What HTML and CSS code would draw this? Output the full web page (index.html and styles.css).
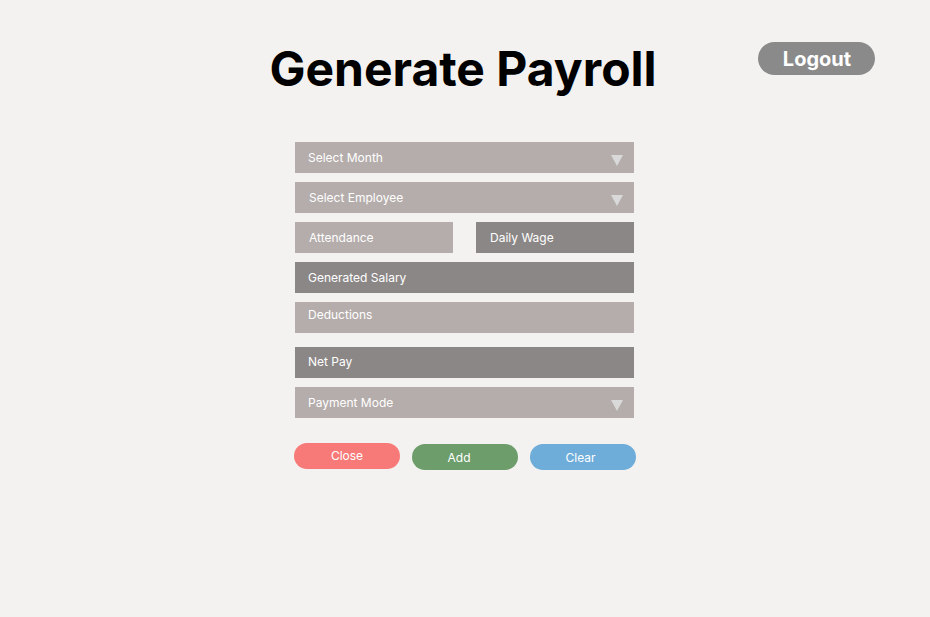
FILE: index.html
```html
<!DOCTYPE html>
<html lang="en">
<head>
<meta charset="utf-8">
<title>Generate Payroll</title>
<link rel="stylesheet" href="styles.css">
</head>
<body>
<div class="page">
  <header class="header">
    <div class="spacer"></div>
    <h1 class="title">Generate Payroll</h1>
    <div class="actions"><button class="logout">Logout</button></div>
  </header>
  <main class="form">
    <div class="field light select"><span>Select Month</span><span class="caret"></span></div>
    <div class="field light select shifted"><span>Select Employee</span><span class="caret"></span></div>
    <div class="pair">
      <div class="field light"><span>Attendance</span></div>
      <div class="field dark"><span>Daily Wage</span></div>
    </div>
    <div class="field dark"><span>Generated Salary</span></div>
    <div class="field light raised"><span>Deductions</span></div>
    <div class="field dark netpay"><span>Net Pay</span></div>
    <div class="field light select"><span>Payment Mode</span><span class="caret"></span></div>
    <div class="buttons">
      <button class="btn close">Close</button>
      <button class="btn add">Add</button>
      <button class="btn clear">Clear</button>
    </div>
  </main>
</div>
</body>
</html>
```
FILE: styles.css
```css
* { box-sizing: border-box; }
html, body { margin: 0; padding: 0; }
body {
  background: #f3f2f0;
  font-family: Inter, "Noto Sans", sans-serif;
  width: 930px;
  height: 617px;
  overflow: hidden;
}
.header {
  display: grid;
  grid-template-columns: 1fr auto 1fr;
  align-items: start;
  padding-top: 40px;
}
.title {
  margin: 0 4px 0 0;
  font-size: 48px;
  line-height: 58px;
  font-weight: 700;
  color: #000;
}
.actions {
  display: flex;
  justify-content: flex-end;
  padding-right: 55px;
  padding-top: 2px;
}
.logout {
  width: 117px;
  height: 33px;
  border: none;
  border-radius: 17px;
  background: #8a8a8a;
  color: #fff;
  font-family: Inter, "Noto Sans", sans-serif;
  font-weight: 700;
  font-size: 20px;
  padding: 0 0 0 1px;
}
.form {
  width: 339px;
  margin: 44px 0 0 calc(50% - 170px);
  display: flex;
  flex-direction: column;
  gap: 9px;
}
.field {
  height: 31px;
  display: flex;
  align-items: center;
  justify-content: space-between;
  padding: 0 11px 0 13px;
  color: #fff;
  font-size: 12px;
}
.field span:first-child { padding-bottom: 1px; }
.light { background: #b5adab; }
.dark { background: #8b8786; }
.shifted { padding-left: 14px; }
.raised { align-items: flex-start; padding-top: 5px; }
.netpay { margin-top: 5px; }
.netpay span:first-child { padding-bottom: 2px; }
.caret {
  width: 0;
  height: 0;
  border-left: 6.5px solid transparent;
  border-right: 6.5px solid transparent;
  border-top: 11px solid #d9d9d9;
  margin-top: 5px;
}
.pair {
  display: grid;
  grid-template-columns: 158px 158px;
  justify-content: space-between;
}
.pair .field { padding-left: 14px; }
.buttons {
  margin: 16px 0 0 -1px;
  width: 342px;
  display: flex;
  justify-content: space-between;
}
.btn {
  width: 106px;
  height: 26px;
  border: none;
  border-radius: 13px;
  color: #fff;
  font-family: Inter, "Noto Sans", sans-serif;
  font-size: 12px;
  padding: 0;
}
.close { background: #f77a78; padding-bottom: 1px; }
.add { background: #6d9d6b; margin-top: 1px; padding-right: 12px; }
.clear { background: #6eacd9; margin-top: 1px; padding-right: 5px; }
```
